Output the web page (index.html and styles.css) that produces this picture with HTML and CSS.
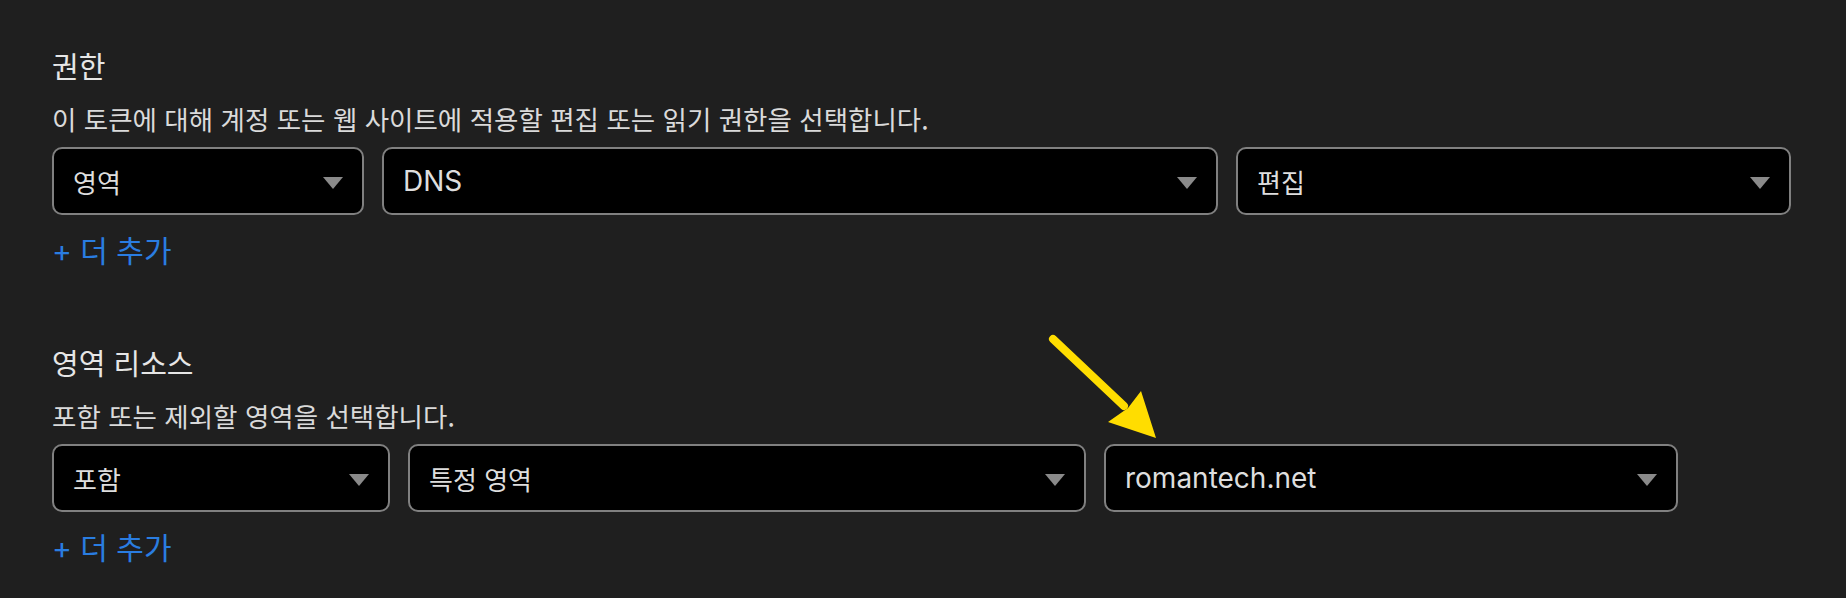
FILE: index.html
```html
<!DOCTYPE html>
<html lang="ko">
<head>
    <meta charset="UTF-8">
    <meta name="viewport" content="width=device-width, initial-scale=1.0">
    <title>API 토큰 권한</title>
    <link rel="stylesheet" href="styles.css">
</head>
<body>
    <div class="page">
        <section class="section">
            <h2 class="section-title">권한</h2>
            <p class="section-desc">이 토큰에 대해 계정 또는 웹 사이트에 적용할 편집 또는 읽기 권한을 선택합니다.</p>
            <div class="select-row permissions">
                <div class="select"><span>영역</span><i class="caret"></i></div>
                <div class="select"><span class="latin">DNS</span><i class="caret"></i></div>
                <div class="select"><span>편집</span><i class="caret"></i></div>
            </div>
            <a class="add-more" href="#">+ 더 추가</a>
        </section>

        <section class="section">
            <h2 class="section-title">영역 리소스</h2>
            <p class="section-desc">포함 또는 제외할 영역을 선택합니다.</p>
            <div class="select-row zones">
                <div class="select"><span>포함</span><i class="caret"></i></div>
                <div class="select"><span>특정 영역</span><i class="caret"></i></div>
                <div class="select"><span class="latin">romantech.net</span><i class="caret"></i></div>
            </div>
            <a class="add-more" href="#">+ 더 추가</a>
        </section>
    </div>

    <!-- annotation arrow pointing at the zone select -->
    <svg class="pointer" width="1846" height="598" viewBox="0 0 1846 598">
        <line x1="1053" y1="339" x2="1124" y2="406" stroke="#ffdd00" stroke-width="8" stroke-linecap="round" />
        <polygon points="1108,422 1128,408 1141,391 1156,438" fill="#ffdd00" />
    </svg>
</body>
</html>
```

FILE: styles.css
```css
/* Dark settings panel */
body {
    margin: 0;
    background-color: #1f1f1f;
    color: #e6e6e6;
    font-family: Inter, "Noto Sans CJK KR", sans-serif;
}

.page {
    padding: 47px 52px 0;
}

.section {
    margin-bottom: 75px;
}

.section:last-child {
    margin-bottom: 0;
}

.section-title {
    margin: 0 0 19px;
    font-family: "Noto Sans CJK KR", sans-serif;
    font-size: 29px;
    font-weight: 400;
    line-height: 36px;
    color: #e6e6e6;
}

.section-desc {
    margin: 0 0 11px;
    font-family: "Noto Sans CJK KR", sans-serif;
    font-size: 26.5px;
    line-height: 34px;
    color: #dadada;
}

.select-row {
    display: grid;
    gap: 18px;
}

.permissions {
    grid-template-columns: 312px 836px 555px;
}

.zones {
    grid-template-columns: 338px 678px 574px;
}

.select {
    display: flex;
    align-items: center;
    justify-content: space-between;
    height: 68px;
    padding: 0 19px;
    box-sizing: border-box;
    background-color: #000;
    border: 2px solid #808080;
    border-radius: 10px;
    font-size: 26px;
    color: #dedede;
}

.select .latin {
    font-size: 28px;
}

.caret {
    width: 0;
    height: 0;
    border-left: 10px solid transparent;
    border-right: 10px solid transparent;
    border-top: 12px solid #8a8a8a;
    margin-top: 4px;
}

.add-more {
    display: inline-block;
    margin-top: 18px;
    font-size: 30px;
    line-height: 36px;
    color: #2a7de1;
    text-decoration: none;
}

.pointer {
    position: absolute;
    top: 0;
    left: 0;
    pointer-events: none;
}
```
